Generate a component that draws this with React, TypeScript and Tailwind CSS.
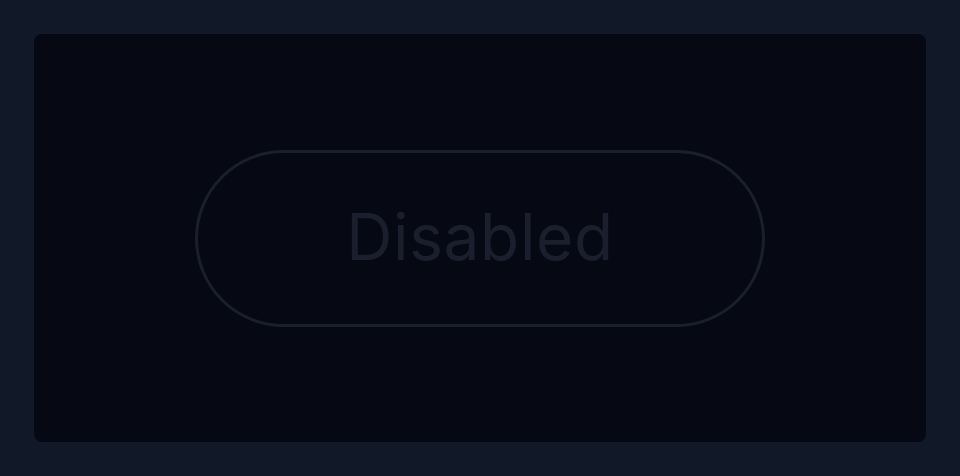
import React from "react";

export default function App() {
  return (
    <div className="w-[960px] h-[476px] bg-[#111827] p-[34px]">
      <div className="w-full h-full bg-[#060913] rounded-lg flex items-center justify-center">
        <button
          disabled
          className="w-[570px] h-[177px] rounded-full border-[3px] border-[#1b1f2d] flex items-center justify-center text-[#1b1f2d] text-[64px] font-normal tracking-[0.6px] pb-[2px]"
          style={{ fontFamily: "Inter, 'Noto Sans', sans-serif" }}
        >
          Disabled
        </button>
      </div>
    </div>
  );
}
